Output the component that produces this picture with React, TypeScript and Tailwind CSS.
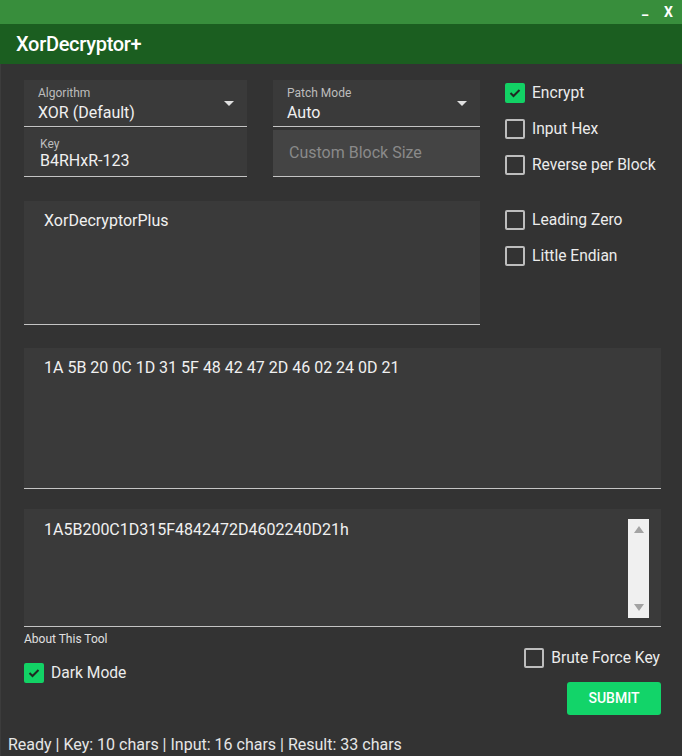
import React from 'react';

function Check({ checked, label }: { checked?: boolean; label: string }) {
  return (
    <div className="flex items-center gap-[7px] h-[20px]">
      {checked ? (
        <div className="w-[20px] h-[20px] rounded-[2px] bg-[#12d265] flex items-center justify-center">
          <svg width="12" height="10" viewBox="0 0 12 10">
            <path d="M1.5 5 L4.5 8 L10.5 2" fill="none" stroke="#1f2a22" strokeWidth="2" />
          </svg>
        </div>
      ) : (
        <div className="w-[20px] h-[20px] rounded-[2px] border-2 border-[#bdbdbd]" />
      )}
      <span className="text-[15.6px] text-[#ececec] leading-none mt-[2px]">{label}</span>
    </div>
  );
}

function Field({ label, value, arrow }: { label: string; value: string; arrow?: boolean }) {
  return (
    <div className="relative h-[47px] bg-[#3a3a3a] border-b border-[#c4c4c4] px-[14px] pt-[6px]">
      <div className="text-[12px] leading-[14px] text-[#bdbdbd]">{label}</div>
      <div className="text-[16px] leading-[20px] text-[#f0f0f0] mt-[3px]">{value}</div>
      {arrow && (
        <svg className="absolute right-[13px] top-[21px]" width="10" height="5" viewBox="0 0 10 5">
          <path d="M0 0 L10 0 L5 5 Z" fill="#e0e0e0" />
        </svg>
      )}
    </div>
  );
}

export default function App() {
  return (
    <div className="w-[682px] h-[756px] bg-[#333333] flex flex-col overflow-hidden" style={{ fontFamily: 'Roboto, "Liberation Sans", sans-serif' }}>
      {/* title strip */}
      <div className="h-[24px] bg-[#388e3c] flex items-center justify-end pr-[9px] gap-[16px] text-white font-bold">
        <span className="text-[14px] leading-none -mt-[6px]">_</span>
        <span className="text-[14px] leading-none">X</span>
      </div>
      <div className="h-[40px] bg-[#1b5e20] flex items-center px-[16px]">
        <span className="text-[20px] font-medium text-white tracking-[-0.3px]">XorDecryptor+</span>
      </div>

      <div className="flex-1 flex flex-col border-l border-[#3c3c3c] pl-[23px] pr-[21px] pt-[16px]">
        {/* top section */}
        <div className="flex">
          <div className="w-[456px] flex flex-col">
            <div className="flex gap-[26px]">
              <div className="w-[223px] flex flex-col gap-[1px]">
                <Field label="Algorithm" value="XOR (Default)" arrow />
                <div className="h-[49px] bg-[#3a3a3a] border-b border-[#c4c4c4] px-[16px] pt-[9px]">
                  <div className="text-[12px] leading-[14px] text-[#bdbdbd]">Key</div>
                  <div className="text-[16px] leading-[20px] text-[#f0f0f0]">B4RHxR-123</div>
                </div>
              </div>
              <div className="w-[207px] flex flex-col gap-[3px]">
                <Field label="Patch Mode" value="Auto" arrow />
                <div className="h-[47px] bg-[#444444] border-b border-[#c4c4c4] px-[16px] flex items-center">
                  <span className="text-[16px] text-[#8a8a8a]">Custom Block Size</span>
                </div>
              </div>
            </div>
            <div className="mt-[24px] h-[124px] bg-[#3a3a3a] border-b border-[#c4c4c4] px-[20px] pt-[8px]">
              <span className="text-[16px] text-[#f0f0f0]">XorDecryptorPlus</span>
            </div>
          </div>
          <div className="ml-[25px] flex flex-col pt-[3px]">
            <div className="flex flex-col gap-[16px]">
              <Check checked label="Encrypt" />
              <Check label="Input Hex" />
              <Check label="Reverse per Block" />
            </div>
            <div className="flex flex-col gap-[16px] mt-[35px]">
              <Check label="Leading Zero" />
              <Check label="Little Endian" />
            </div>
          </div>
        </div>

        <div className="mt-[23px] h-[141px] bg-[#3a3a3a] border-b border-[#c4c4c4] px-[20px] pt-[8px]">
          <span className="text-[16px] text-[#f0f0f0]">1A 5B 20 0C 1D 31 5F 48 42 47 2D 46 02 24 0D 21</span>
        </div>

        <div className="mt-[20px] h-[118px] bg-[#3a3a3a] border-b border-[#c4c4c4] pl-[20px] pr-[12px] pt-[10px] flex">
          <span className="flex-1 text-[16px] text-[#f0f0f0] -mt-[1px]">1A5B200C1D315F4842472D4602240D21h</span>
          <div className="w-[21px] h-[99px] bg-[#f0f0f0] flex flex-col items-center justify-between py-[7px]">
            <svg width="10" height="7" viewBox="0 0 10 7"><path d="M0 7 L5 0 L10 7 Z" fill="#a3a3a3" /></svg>
            <svg width="10" height="7" viewBox="0 0 10 7"><path d="M0 0 L10 0 L5 7 Z" fill="#a3a3a3" /></svg>
          </div>
        </div>

        <div className="flex justify-between mt-[5px]">
          <div className="flex flex-col">
            <span className="text-[12px] leading-[14px] text-[#e0e0e0]">About This Tool</span>
            <div className="mt-[17px]">
              <Check checked label="Dark Mode" />
            </div>
          </div>
          <div className="flex flex-col items-end pt-[16px]">
            <div className="mr-[1px]">
              <Check label="Brute Force Key" />
            </div>
            <button className="mt-[14px] w-[94px] h-[33px] rounded-[3px] bg-[#12d469] text-white text-[14px] font-medium">SUBMIT</button>
          </div>
        </div>

        <div className="mt-auto -ml-[16px] -mb-[1px] text-[16px] text-[#e6e6e6]">
          Ready | Key: 10 chars | Input: 16 chars | Result: 33 chars
        </div>
      </div>
    </div>
  );
}
